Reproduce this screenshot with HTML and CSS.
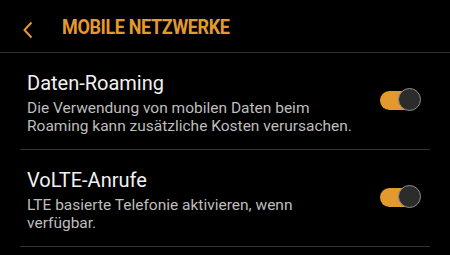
FILE: index.html
```html
<!DOCTYPE html>
<html>
  <head>
    <link rel="stylesheet" href="styles.css">
  </head>
  <body>
    <div class="header">
      <svg class="back" width="12" height="18" viewBox="0 0 12 18">
        <polyline points="9.5,1.5 2.5,9 9.5,16.5" fill="none" stroke="#e39a2d" stroke-width="2" />
      </svg>
      <span class="title">MOBILE NETZWERKE</span>
    </div>
    <div class="list">
      <div class="row">
        <div class="text">
          <div class="label">Daten-Roaming</div>
          <div class="summary">Die Verwendung von mobilen Daten beim<br>Roaming kann zusätzliche Kosten verursachen.</div>
        </div>
        <div class="switch"><span class="thumb"></span></div>
      </div>
      <div class="row">
        <div class="text">
          <div class="label">VoLTE-Anrufe</div>
          <div class="summary">LTE basierte Telefonie aktivieren, wenn<br>verfügbar.</div>
        </div>
        <div class="switch"><span class="thumb"></span></div>
      </div>
    </div>
  </body>
</html>
```

FILE: styles.css
```css
body {
  margin: 0;
  background-color: #000000;
  font-family: Roboto, "Liberation Sans", sans-serif;
  overflow: hidden;
}
.header {
  display: flex;
  align-items: center;
  height: 52px;
  border-bottom: 1px solid #303030;
  padding-left: 22px;
}
.back {
  display: block;
  margin-top: 7px;
}
.title {
  margin-left: 28px;
  margin-top: 2px;
  color: #e39a2d;
  font-size: 20px;
  font-weight: bold;
  letter-spacing: -0.4px;
  transform: scaleX(0.9);
  transform-origin: left center;
}
.list {
  margin: 0 20px;
}
.row {
  display: flex;
  align-items: center;
  justify-content: space-between;
  height: 96px;
  padding: 0 9px 0 7px;
  border-bottom: 1px solid #333333;
}
.text {
  margin-top: 3px;
}
.label {
  color: #f2f2f2;
  font-size: 20px;
  line-height: 24px;
}
.summary {
  color: #bdbdbd;
  font-size: 15.5px;
  line-height: 18px;
  margin-top: 4px;
}
.switch {
  position: relative;
  width: 36px;
  height: 19px;
  border-radius: 10px;
  background-color: #e39a2d;
  margin: -2px 5px 0 0;
}
.thumb {
  position: absolute;
  right: -5px;
  top: -3px;
  width: 23px;
  height: 23px;
  box-sizing: border-box;
  border-radius: 50%;
  background-color: #2c2c2c;
  border: 1px solid #8c8c8c;
}
```
